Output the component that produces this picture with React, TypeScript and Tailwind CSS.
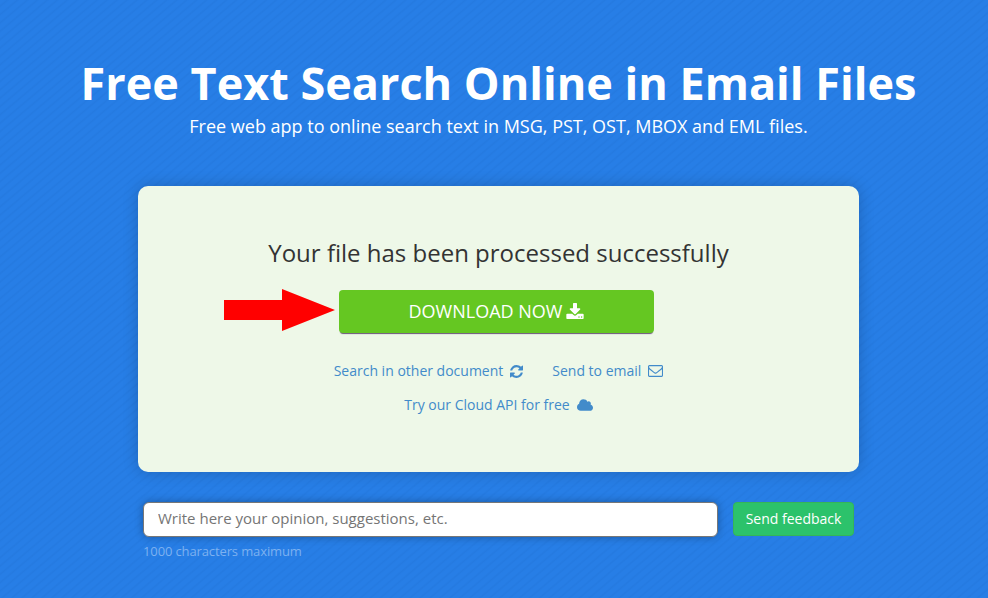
import React from "react";

const DOWNLOAD =
  "M1280 1344q0-26-19-45t-45-19-45 19-19 45 19 45 45 19 45-19 19-45zm256 0q0-26-19-45t-45-19-45 19-19 45 19 45 45 19 45-19 19-45zm128-224v320q0 40-28 68t-68 28h-1472q-40 0-68-28t-28-68v-320q0-40 28-68t68-28h465l135 136q58 56 136 56t136-56l136-136h464q40 0 68 28t28 68zm-325-569q17 41-14 70l-448 448q-18 19-45 19t-45-19l-448-448q-31-29-14-70 17-39 59-39h256v-448q0-26 19-45t45-19h256q26 0 45 19t19 45v448h256q42 0 59 39z";
const REFRESH =
  "M1639 1056q0 5-1 7-64 268-268 434.5t-478 166.5q-146 0-282.5-55t-243.5-157l-129 129q-19 19-45 19t-45-19-19-45v-448q0-26 19-45t45-19h448q26 0 45 19t19 45-19 45l-137 137q71 66 161 102t187 36q134 0 250-65t186-179q11-17 53-117 8-23 30-23h192q13 0 22.5 9.5t9.5 22.5zm25-800v448q0 26-19 45t-45 19h-448q-26 0-45-19t-19-45 19-45l138-138q-148-137-349-137-134 0-250 65t-186 179q-11 17-53 117-8 23-30 23h-199q-13 0-22.5-9.5t-9.5-22.5v-7q65-268 270-434.5t480-166.5q146 0 284 55.5t245 156.5l130-129q19-19 45-19t45 19 19 45z";
const ENVELOPE =
  "M1664 1504v-768q-32 36-69 66-268 206-426 338-51 43-83 67t-86.5 48.5-102.5 24.5h-2q-48 0-102.5-24.5t-86.5-48.5-83-67q-158-132-426-338-37-30-69-66v768q0 13 9.5 22.5t22.5 9.5h1472q13 0 22.5-9.5t9.5-22.5zm0-1051v-24.5l-.5-13-3-12.5-5.5-9-9-7.5-14-2.5h-1472q-13 0-22.5 9.5t-9.5 22.5q0 168 147 284 193 152 401 317 6 5 35 29.5t46 37.5 44.5 31.5 50.5 27.5 43 9h2q20 0 43-9t50.5-27.5 44.5-31.5 46-37.5 35-29.5q208-165 401-317 54-43 100.5-115.5t46.5-131.5zm128-37v1088q0 66-47 113t-113 47h-1472q-66 0-113-47t-47-113v-1088q0-66 47-113t113-47h1472q66 0 113 47t47 113z";
const CLOUD =
  "M1984 1152q0 159-112.5 271.5t-271.5 112.5h-1088q-185 0-316.5-131.5t-131.5-316.5q0-132 71-241.5t187-163.5q-2-28-2-43 0-212 150-362t362-150q158 0 286.5 88t187.5 230q70-62 166-62 106 0 181 75t75 181q0 75-41 138 129 30 213 134.5t84 239.5z";

function Icon({ d, viewBox, className }: { d: string; viewBox: string; className: string }) {
  return (
    <svg viewBox={viewBox} className={className} fill="currentColor" aria-hidden="true">
      <path d={d} />
    </svg>
  );
}

export default function App() {
  return (
    <main className="flex h-[598px] w-[988px] flex-col overflow-hidden bg-[#277ee6] bg-[repeating-linear-gradient(140deg,#277ee6_0px,#277ee6_3.2px,#257ae0_4.8px,#277ee6_6.4px)] pt-[52px] font-['Open_Sans',sans-serif] text-white">
      <header className="flex flex-col items-center pl-[9px]">
        <h1 className="whitespace-nowrap text-[45px] leading-[62px] font-bold">
          Free Text Search Online in Email Files
        </h1>
        <p className="whitespace-nowrap text-[18px] leading-[25px]">
          Free web app to online search text in MSG, PST, OST, MBOX and EML files.
        </p>
      </header>

      <section className="mt-[47px] ml-[138px] flex h-[286px] w-[721px] flex-col items-center rounded-[10px] bg-[#eef8e8] pt-[50px] shadow-[0_0_16px_rgba(0,0,0,0.2)]">
        <h2 className="whitespace-nowrap text-[24px] leading-[34px] text-[#333]">
          Your file has been processed successfully
        </h2>
        <div className="mt-[19px] flex h-[43px] w-full items-start pl-[86px]">
          <svg viewBox="0 0 111 42" className="h-[42px] w-[111px] shrink-0" aria-hidden="true">
            <path d="M0 11H58V0L111 21L58 42V31H0Z" fill="#ff0000" />
          </svg>
          <button className="ml-[4px] mt-px flex h-[43px] w-[315px] shrink-0 items-center justify-center gap-[4px] rounded-[4px] bg-[#65c722] text-[18px] whitespace-nowrap shadow-[0_2px_1px_-1px_rgba(60,30,80,0.75)]">
            <span>DOWNLOAD NOW</span>
            <Icon d={DOWNLOAD} viewBox="0 0 1664 1536" className="mb-[2px] h-[16px] w-[18px]" />
          </button>
        </div>
        <nav className="mt-[29px] flex flex-col items-center text-[14px] leading-[20px] text-[#428bca]">
          <div className="flex gap-[29px] whitespace-nowrap">
            <a className="flex items-center gap-[7px]">
              Search in other document
              <Icon d={REFRESH} viewBox="128 128 1536 1536" className="h-[13px] w-[13px]" />
            </a>
            <a className="flex items-center gap-[7px]">
              Send to email
              <Icon d={ENVELOPE} viewBox="0 256 1792 1408" className="h-[12px] w-[15px]" />
            </a>
          </div>
          <a className="mt-[14px] flex items-center gap-[7px] whitespace-nowrap">
            Try our Cloud API for free
            <Icon d={CLOUD} viewBox="64 128 1920 1408" className="h-[12px] w-[16px]" />
          </a>
        </nav>
      </section>

      <form className="mt-[30px] ml-[143px] flex">
        <div>
          <input
            className="block h-[35px] w-[575px] rounded-[6px] border border-[#777] bg-white px-[14px] pb-[3px] text-[15px] shadow-[0_0_8px_rgba(0,0,0,0.3)] placeholder:text-[#757575]"
            placeholder="Write here your opinion, suggestions, etc."
          />
          <p className="mt-[5px] text-[13px] leading-[18px] tracking-[-0.12px] text-[#7db1f0]">
            1000 characters maximum
          </p>
        </div>
        <button
          type="button"
          className="ml-[15px] h-[34px] w-[121px] rounded-[4px] border border-[#35b558] bg-[#2cc26b] pb-[2px] text-[14px] whitespace-nowrap"
        >
          Send feedback
        </button>
      </form>
    </main>
  );
}
